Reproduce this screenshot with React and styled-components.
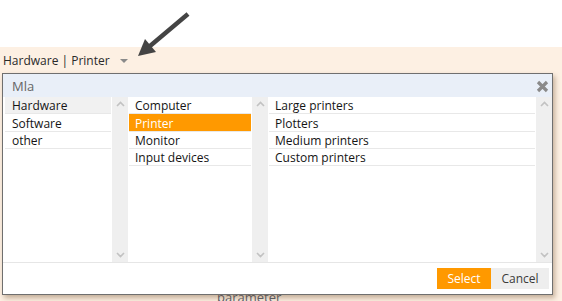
import React from "react";
import styled, { createGlobalStyle } from "styled-components";

const GlobalStyle = createGlobalStyle`
  html, body { margin: 0; padding: 0; background: #fff; }
  body {
    font-family: "Open Sans", "Noto Sans", sans-serif;
    font-size: 12px;
    color: #222;
  }
  * { box-sizing: border-box; }
`;

const Page = styled.div`
  position: relative;
  width: 562px;
  height: 301px;
  overflow: hidden;
  display: flex;
  flex-direction: column;
  background: #fff;
`;

const TopSpace = styled.div`
  height: 47px;
  flex: none;
`;

const Band = styled.div`
  flex: 1;
  background: #fdf0e3;
  display: flex;
  flex-direction: column;
`;

const Crumb = styled.div`
  height: 26px;
  display: flex;
  align-items: center;
  gap: 10px;
  padding-left: 3px;
  color: #2a2a2a;
  font-size: 12px;
`;

const Caret = styled.span`
  width: 0;
  height: 0;
  border-left: 4.5px solid transparent;
  border-right: 4.5px solid transparent;
  border-top: 4px solid #8a8a8a;
  margin-top: 1px;
`;

const PageContent = styled.div`
  padding: 215px 0 0 217px;
  color: #5a5f6e;
  font-size: 13px;
  line-height: 18px;
`;

const Annotation = styled.svg`
  position: absolute;
  left: 0;
  top: 0;
  pointer-events: none;
`;

const Dialog = styled.div`
  position: absolute;
  left: 2px;
  top: 73px;
  width: 551px;
  height: 222px;
  background: #fff;
  border: 1px solid #6f6f6f;
  box-shadow: 2px 3px 5px rgba(110, 75, 40, 0.4);
  display: flex;
  flex-direction: column;
`;

const Header = styled.div`
  height: 23px;
  flex: none;
  background: #e9eff8;
  display: flex;
  align-items: center;
  justify-content: space-between;
  padding: 1px 3px 0 9px;
  color: #666;
  font-size: 13px;
`;

const CloseButton = styled.button`
  border: 0;
  background: transparent;
  padding: 0;
  width: 14px;
  height: 14px;
  display: flex;
  align-items: center;
  justify-content: center;
  cursor: pointer;
`;

const Body = styled.div`
  height: 165px;
  flex: none;
  display: flex;
  padding: 0 1px 0 1px;
`;

const List = styled.div`
  width: ${(p) => p.$w}px;
  flex: none;
  padding: 0 1px;
  display: flex;
  flex-direction: column;
`;

const Item = styled.div`
  height: 17.33px;
  flex: none;
  display: flex;
  align-items: center;
  padding: 1px 0 0 ${(p) => p.$pad || 6}px;
  border-bottom: 1px solid #e8e8e8;
  color: ${(p) => (p.$active ? "#fff" : "#141414")};
  background: ${(p) =>
    p.$active ? "#ff9900" : p.$soft ? "#f1f1f1" : "transparent"};
  font-size: 12px;
  white-space: nowrap;
`;

const Scrollbar = styled.div`
  width: 16px;
  flex: none;
  background: #efefef;
  display: flex;
  flex-direction: column;
  justify-content: space-between;
  align-items: center;
  padding: 4px 0 4px;
`;

const Footer = styled.div`
  flex: 1;
  border-top: 1px solid #e6e6e6;
  display: flex;
  justify-content: flex-end;
  align-items: center;
  padding-right: 3px;
`;

const Button = styled.button`
  height: 21px;
  width: ${(p) => p.$w}px;
  border: 0;
  padding: 0;
  font-family: inherit;
  font-size: 12px;
  background: ${(p) => (p.$primary ? "#ff9900" : "#eeeeee")};
  color: ${(p) => (p.$primary ? "#fff" : "#3a3a3a")};
  cursor: pointer;
`;

const Chevron = ({ up }) => (
  <svg width="9" height="6" viewBox="0 0 9 6">
    <polyline
      points={up ? "1,5 4.5,1.5 8,5" : "1,1 4.5,4.5 8,1"}
      fill="none"
      stroke="#c2c2c2"
      strokeWidth="1.6"
    />
  </svg>
);

const Bar = () => (
  <Scrollbar>
    <Chevron up />
    <Chevron />
  </Scrollbar>
);

const col1 = ["Hardware", "Software", "other"];
const col2 = ["Computer", "Printer", "Monitor", "Input devices"];
const col3 = ["Large printers", "Plotters", "Medium printers", "Custom printers"];

export default function App() {
  return (
    <>
      <GlobalStyle />
      <Page>
        <TopSpace />
        <Band>
          <Crumb>
            <span>Hardware | Printer</span>
            <Caret />
          </Crumb>
          <PageContent>parameter</PageContent>
        </Band>

        <Annotation width="200" height="65" viewBox="0 0 200 65">
          <line
            x1="188"
            y1="14"
            x2="150"
            y2="46"
            stroke="#444"
            strokeWidth="4.5"
          />
          <polygon points="138,56 156,52 145,39" fill="#444" />
        </Annotation>

        <Dialog>
          <Header>
            <span>Mla</span>
            <CloseButton aria-label="close">
              <svg width="13" height="13" viewBox="0 0 13 13">
                <path
                  d="M2 2 L11 11 M11 2 L2 11"
                  stroke="#8a8a8a"
                  strokeWidth="3.2"
                />
              </svg>
            </CloseButton>
          </Header>
          <Body>
            <List $w={108}>
              {col1.map((t, i) => (
                <Item key={t} $soft={i === 0} $pad={7}>
                  {t}
                </Item>
              ))}
            </List>
            <Bar />
            <List $w={124}>
              {col2.map((t, i) => (
                <Item key={t} $active={i === 1}>
                  {t}
                </Item>
              ))}
            </List>
            <Bar />
            <List $w={268}>
              {col3.map((t) => (
                <Item key={t}>{t}</Item>
              ))}
            </List>
            <Bar />
          </Body>
          <Footer>
            <Button $primary $w={54}>Select</Button>
            <Button $w={58}>Cancel</Button>
          </Footer>
        </Dialog>
      </Page>
    </>
  );
}
